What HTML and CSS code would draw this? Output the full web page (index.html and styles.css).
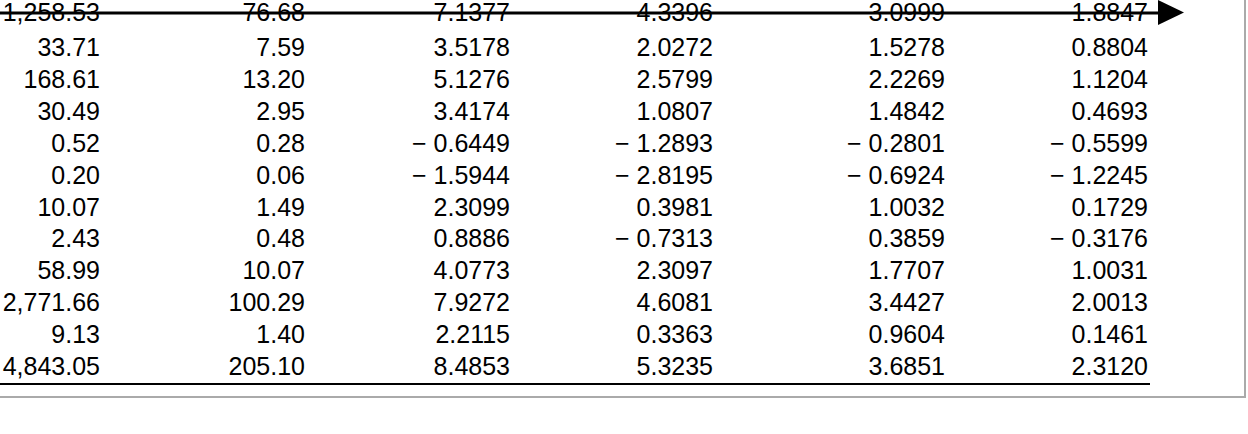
FILE: index.html
```html
<!DOCTYPE html>
<html>
<head>
<meta charset="utf-8">
<link rel="stylesheet" href="styles.css">
</head>
<body>
<div class="page">
  <div class="panel">
    <table class="data">
      <colgroup>
        <col class="c1"><col class="c2"><col class="c3"><col class="c4"><col class="c5"><col class="c6">
      </colgroup>
      <tbody>
        <tr class="first"><td>1,258.53</td><td>76.68</td><td>7.1377</td><td>4.3396</td><td>3.0999</td><td>1.8847</td></tr>
        <tr><td>33.71</td><td>7.59</td><td>3.5178</td><td>2.0272</td><td>1.5278</td><td>0.8804</td></tr>
        <tr><td>168.61</td><td>13.20</td><td>5.1276</td><td>2.5799</td><td>2.2269</td><td>1.1204</td></tr>
        <tr><td>30.49</td><td>2.95</td><td>3.4174</td><td>1.0807</td><td>1.4842</td><td>0.4693</td></tr>
        <tr><td>0.52</td><td>0.28</td><td>− 0.6449</td><td>− 1.2893</td><td>− 0.2801</td><td>− 0.5599</td></tr>
        <tr><td>0.20</td><td>0.06</td><td>− 1.5944</td><td>− 2.8195</td><td>− 0.6924</td><td>− 1.2245</td></tr>
        <tr><td>10.07</td><td>1.49</td><td>2.3099</td><td>0.3981</td><td>1.0032</td><td>0.1729</td></tr>
        <tr><td>2.43</td><td>0.48</td><td>0.8886</td><td>− 0.7313</td><td>0.3859</td><td>− 0.3176</td></tr>
        <tr><td>58.99</td><td>10.07</td><td>4.0773</td><td>2.3097</td><td>1.7707</td><td>1.0031</td></tr>
        <tr><td>2,771.66</td><td>100.29</td><td>7.9272</td><td>4.6081</td><td>3.4427</td><td>2.0013</td></tr>
        <tr><td>9.13</td><td>1.40</td><td>2.2115</td><td>0.3363</td><td>0.9604</td><td>0.1461</td></tr>
        <tr><td>4,843.05</td><td>205.10</td><td>8.4853</td><td>5.3235</td><td>3.6851</td><td>2.3120</td></tr>
      </tbody>
    </table>
  </div>
  <svg class="arrow" width="1190" height="26" viewBox="0 0 1190 26">
    <line x1="0" y1="13" x2="1162" y2="13" stroke="#000" stroke-width="3"/>
    <polygon points="1158,0 1184,12.5 1158,25" fill="#000"/>
  </svg>
</div>
</body>
</html>
```

FILE: styles.css
```css
html, body {
  margin: 0;
  padding: 0;
  background: #fff;
}

body {
  font-family: "Liberation Sans", Arial, sans-serif;
  color: #000;
  overflow: hidden;
}

.page {
  position: relative;
  width: 1248px;
  height: 434px;
}

.panel {
  width: 1244px;
  border-right: 2px solid #aaaaaa;
  border-bottom: 2px solid #aaaaaa;
  padding-bottom: 11px;
}

.data {
  width: 1150px;
  table-layout: fixed;
  border-collapse: separate;
  border-spacing: 0;
  border-bottom: 2px solid #000;
  font-size: 25px;
}

.data td {
  height: 31.9px;
  padding: 0 2px 0 0;
  text-align: right;
  white-space: nowrap;
  line-height: 31.9px;
  box-sizing: border-box;
  vertical-align: top;
}

.data .first td {
  height: 32px;
  line-height: 24px;
  padding-bottom: 8px;
}

.c1 { width: 102px; }
.c2 { width: 205px; }
.c3 { width: 205px; }
.c4 { width: 203px; }
.c5 { width: 232px; }
.c6 { width: 203px; }

.arrow {
  position: absolute;
  left: 0;
  top: 0;
}
```
